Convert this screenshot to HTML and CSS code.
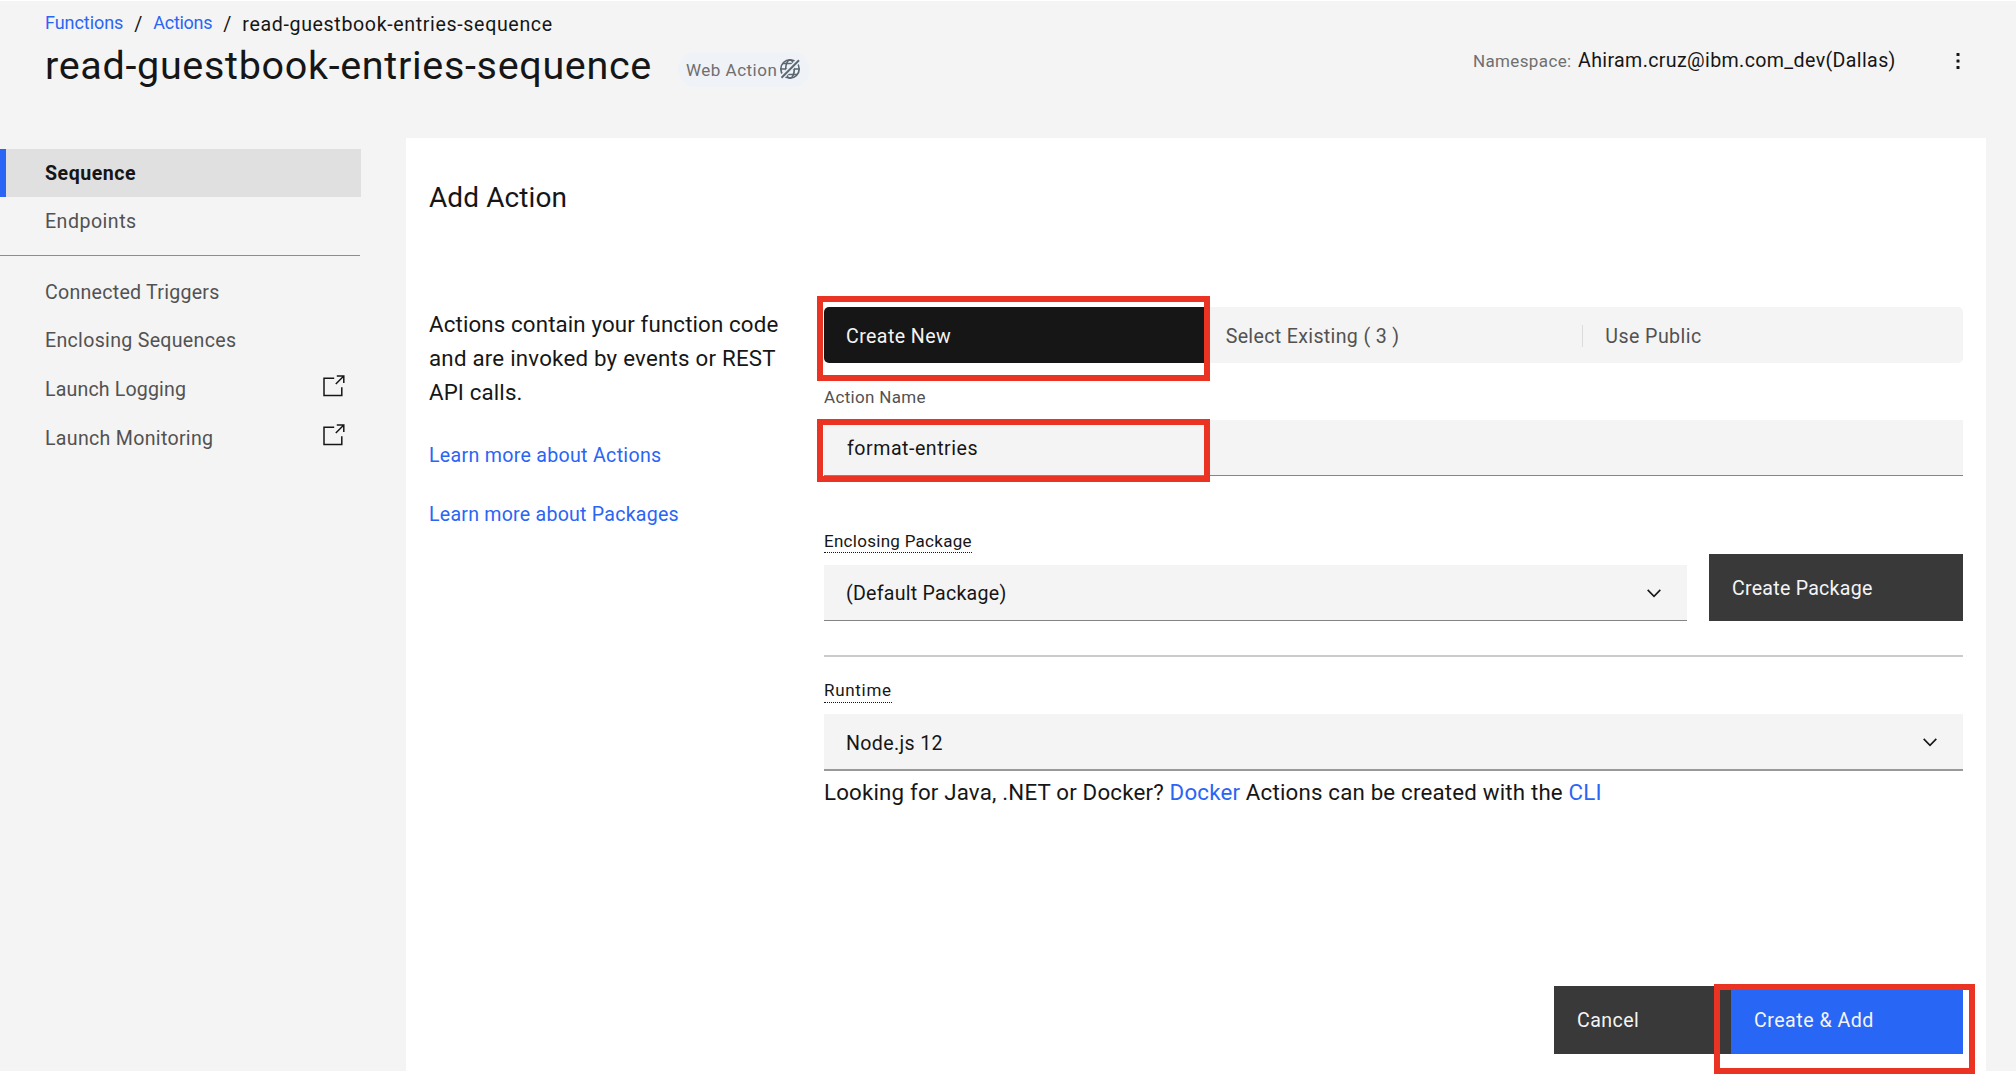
FILE: index.html
```html
<!DOCTYPE html>
<html lang="en">
<head>
<meta charset="utf-8">
<title>read-guestbook-entries-sequence</title>
<link rel="stylesheet" href="styles.css">
</head>
<body>
<div class="page">
  <header class="header">
    <div class="heading">
      <nav class="breadcrumb">
        <a class="crumb-link" href="#">Functions</a><span class="slash">/</span><a class="crumb-link actions" href="#">Actions</a><span class="slash second">/</span><span class="crumb">read-guestbook-entries-sequence</span>
      </nav>
      <div class="title-row">
        <h1 class="title">read-guestbook-entries-sequence</h1>
        <span class="tag">Web Action
          <svg class="globe" viewBox="0 0 22 22" fill="none" stroke="#5a6872" stroke-width="1.7">
            <circle cx="11" cy="11" r="9.2"/>
            <ellipse cx="11" cy="11" rx="4.3" ry="9.2"/>
            <path d="M2 11H20M4 5.5H18M4 16.5H18"/>
            <path d="M2 20L20 2" stroke="#eff2f7" stroke-width="5"/>
            <path d="M2.5 19.8L20 2.3" stroke-width="2"/>
          </svg>
        </span>
      </div>
    </div>
    <div class="namespace">
      <span class="namespace-label">Namespace:</span>
      <span class="namespace-value">Ahiram.cruz@ibm.com_dev(Dallas)</span>
      <svg class="overflow" viewBox="0 0 4 16" fill="#161616"><rect x=".5" width="3" height="3" rx=".6"/><rect x=".5" y="6.5" width="3" height="3" rx=".6"/><rect x=".5" y="13" width="3" height="3" rx=".6"/></svg>
    </div>
  </header>

  <div class="body">
    <aside class="sidebar">
      <a class="nav-item active" href="#">Sequence</a>
      <a class="nav-item endpoints" href="#">Endpoints</a>
      <div class="nav-rule"></div>
      <a class="nav-item" href="#">Connected Triggers</a>
      <a class="nav-item sequences" href="#">Enclosing Sequences</a>
      <a class="nav-item launch logging" href="#">Launch Logging
        <svg class="launch-icon" viewBox="0 0 22 22" fill="none" stroke="#161616" stroke-width="1.5"><path d="M11.2 3.2H1V20.6H18.8V12.2"/><path d="M13.8 1H20.8V8M20.8 1L12.8 9"/></svg></a>
      <a class="nav-item launch" href="#">Launch Monitoring
        <svg class="launch-icon" viewBox="0 0 22 22" fill="none" stroke="#161616" stroke-width="1.5"><path d="M11.2 3.2H1V20.6H18.8V12.2"/><path d="M13.8 1H20.8V8M20.8 1L12.8 9"/></svg></a>
    </aside>

    <main class="panel">
      <h2 class="panel-title">Add Action</h2>
      <div class="columns">
        <section class="help">
          <p class="help-text">Actions contain your function code <span class="loose">and are invoked by events or REST</span> API calls.</p>
          <a class="help-link" href="#">Learn more about Actions</a>
          <a class="help-link packages" href="#">Learn more about Packages</a>
        </section>

        <form class="form">
          <div class="switcher">
            <div class="switch selected">Create New</div>
            <div class="switch existing">Select Existing ( 3 )</div>
            <div class="switch public">Use Public</div>
          </div>
          <div class="label">Action Name</div>
          <div class="field name-field">format-entries</div>

          <div class="package-row">
            <div class="package">
              <div class="term">Enclosing Package</div>
              <div class="field">(Default Package)
                <svg class="chevron" viewBox="0 0 14 9" fill="none" stroke="#161616" stroke-width="1.6"><path d="M.7.9L7 7.4L13.3.9"/></svg></div>
            </div>
            <div class="button package-button">Create Package</div>
          </div>
          <div class="rule"></div>
          <div class="term runtime">Runtime</div>
          <div class="field runtime-field">Node.js 12
            <svg class="chevron" viewBox="0 0 14 9" fill="none" stroke="#161616" stroke-width="1.6"><path d="M.7.9L7 7.4L13.3.9"/></svg></div>
          <p class="hint">Looking for Java, .NET or Docker? <a href="#">Docker</a> Actions can be created with the <a href="#">CLI</a></p>
          <div class="actions-row">
            <div class="button cancel">Cancel</div>
            <div class="button primary">Create &amp; Add</div>
          </div>
        </form>
      </div>
    </main>
  </div>
</div>
<div class="callout callout-tab"></div>
<div class="callout callout-name"></div>
<div class="callout callout-submit"></div>
</body>
</html>
```
FILE: styles.css
```css
* { box-sizing: border-box; }
body {
  margin: 0;
  background: #fff;
  color: #161616;
  font-family: Roboto, "Noto Sans", sans-serif;
  font-size: 19.6px;
  letter-spacing: .25px;
  overflow: hidden;
}
a { color: #2a65f5; text-decoration: none; }
h1, h2, p { margin: 0; font-weight: 400; }
svg { display: block; flex: none; }

.page {
  height: 1071px;
  border-top: 1px solid #fff;
  background: #f4f4f4;
}

/* Header */
.header {
  display: flex;
  justify-content: space-between;
  height: 137px;
  padding: 11px 56px 0 45px;
}
.breadcrumb { display: flex; align-items: center; height: 25px; }
.crumb-link { padding-bottom: 4px; font-size: 18px; letter-spacing: -.06px; }
.crumb-link.actions { letter-spacing: -.27px; }
.slash { width: 30px; padding-left: 11px; }
.slash.second { width: 30px; }
.crumb { letter-spacing: .64px; }
.title-row { display: flex; gap: 26px; margin-top: 4px; }
.title { font-size: 39.5px; line-height: 50px; letter-spacing: .68px; }
.tag {
  display: flex;
  align-items: center;
  gap: 2px;
  height: 35px;
  margin-top: 11px;
  padding: 0 9px 0 8px;
  border-radius: 18px;
  background: #eff2f7;
  color: #6f6f6f;
  font-size: 17px;
  letter-spacing: .5px;
}
.globe { width: 22px; height: 22px; margin-bottom: 1px; }
.namespace { display: flex; height: 24px; margin-top: 36px; line-height: 26px; }
.namespace-label { width: 105px; color: #6f6f6f; font-size: 17px; letter-spacing: .36px; }
.namespace-value { width: 378px; letter-spacing: .37px; }
.overflow { width: 4px; height: 16px; margin-top: 5px; }

/* Sidebar */
.body { display: flex; height: 933px; }
.sidebar { width: 406px; padding-top: 11px; }
.nav-item {
  display: flex;
  align-items: center;
  justify-content: space-between;
  width: 361px;
  height: 48px;
  padding: 0 16px 0 45px;
  color: #525252;
}
.nav-item.active {
  padding-left: 39px;
  border-left: 6px solid #2a65f5;
  background: #e0e0e0;
  color: #161616;
  font-weight: 700;
  letter-spacing: .5px;
}
.nav-item.endpoints { letter-spacing: .48px; }
.nav-item.sequences { letter-spacing: .3px; }
.nav-item.launch { height: 49px; padding-top: 2px; letter-spacing: .3px; }
.nav-item.launch.logging { letter-spacing: .15px; }
.nav-rule { width: 360px; height: 1px; margin: 10px 0 12px; background: #8d8d8d; }
.launch-icon { width: 22px; height: 22px; margin-bottom: 8px; }

/* Panel */
.panel { width: 1580px; padding: 42px 23px 0 23px; background: #fff; }
.panel-title { font-size: 28px; line-height: 36px; letter-spacing: .09px; }
.columns { display: flex; justify-content: space-between; margin-top: 91px; }
.help { width: 360px; }
.help-text { font-size: 22.3px; line-height: 34px; letter-spacing: .13px; }
.loose { letter-spacing: .22px; }
.help-link { display: block; margin-top: 35px; line-height: 24px; letter-spacing: .3px; }
.help-link.packages { letter-spacing: .23px; }

/* Form */
.form { width: 1139px; }
.switcher { display: flex; height: 56px; border-radius: 5px; overflow: hidden; background: #f4f4f4; }
.switch { display: flex; align-items: center; width: 379.67px; padding: 2px 0 0 22px; color: #525252; }
.switch.selected { background: #161616; color: #f4f4f4; letter-spacing: .41px; }
.switch.existing { justify-content: space-between; letter-spacing: .34px; }
.switch.existing::after { content: ""; width: 1px; height: 22px; background: #dcdcdc; }
.switch.public { letter-spacing: .43px; }
.label { height: 24px; margin-top: 22px; color: #525252; font-size: 17px; line-height: 24px; letter-spacing: .32px; }
.field {
  display: flex;
  align-items: center;
  justify-content: space-between;
  height: 56px;
  padding: 2px 26px 0 22px;
  border-bottom: 1px solid #858585;
  background: #f4f4f4;
}
.chevron { width: 14px; height: 9px; margin-bottom: 1px; }
.name-field { margin-top: 11px; padding-left: 23px; letter-spacing: .52px; }
.package-row { display: flex; align-items: flex-end; gap: 22px; margin-top: 54px; }
.package { width: 863px; }
.term { width: max-content; margin-bottom: 12px; border-bottom: 1px dotted #161616; font-size: 17px; line-height: 22px; letter-spacing: .28px; }
.button { display: flex; align-items: center; height: 68px; padding: 1px 0 0 23px; background: #393939; color: #f4f4f4; }
.package-button { width: 254px; height: 67px; }
.rule { height: 2px; margin-top: 34px; background: #cbcbcb; }
.runtime { margin: 22px 0 11px; padding-bottom: 1px; letter-spacing: .7px; }
.runtime-field { height: 57px; padding-top: 3px; border-bottom: 2px solid #999; letter-spacing: .34px; }
.hint { margin-top: 6px; font-size: 22.3px; line-height: 30px; letter-spacing: .18px; }
.actions-row { display: flex; justify-content: flex-end; margin-top: 179px; }
.cancel { width: 177px; letter-spacing: .42px; }
.primary { width: 232px; background: #2866f6; letter-spacing: .5px; }

/* Callout frames laid over the form */
.callout { position: absolute; border: 6px solid #ea3323; }
.callout-tab { left: 817px; top: 296px; width: 393px; height: 85px; }
.callout-name { left: 817px; top: 419px; width: 393px; height: 63px; }
.callout-submit { left: 1714px; top: 984px; width: 261px; height: 90px; }
```
